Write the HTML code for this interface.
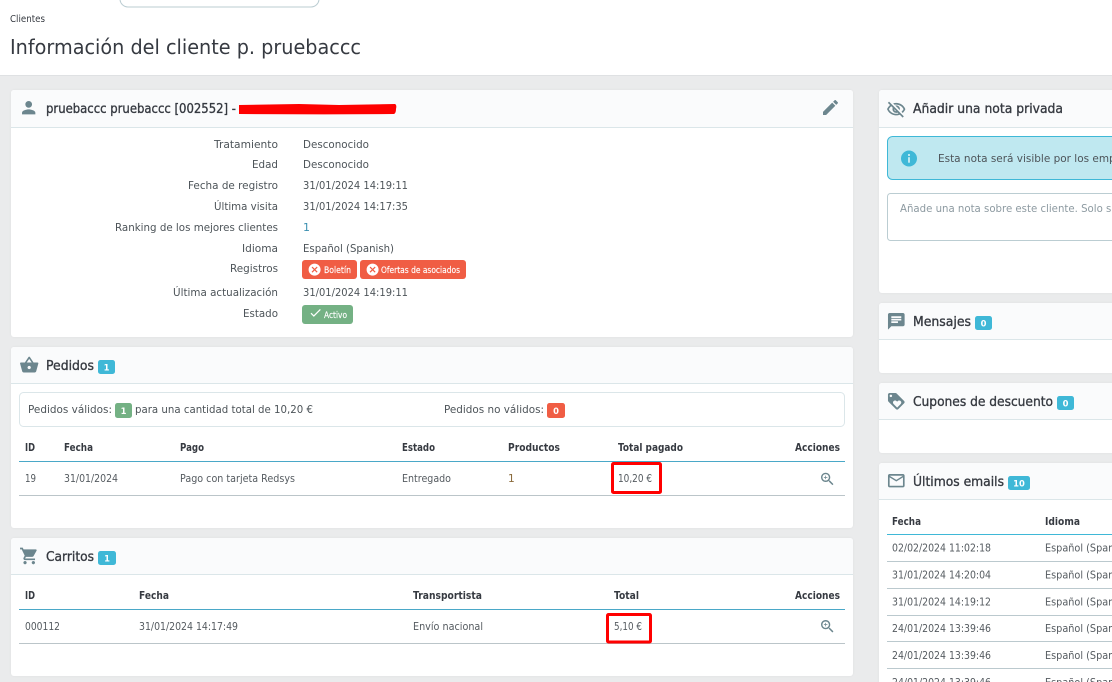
<!DOCTYPE html>
<html lang="es"><head><meta charset="utf-8"><title>Información del cliente</title>
<style>
html,body{margin:0;padding:0;background:#eaebec;overflow:hidden;width:1112px;height:682px}
svg{display:block;font-family:"DejaVu Sans","Liberation Sans",sans-serif}
text{white-space:pre}
.b{font-size:11px;fill:#4d5459}
.h{font-size:13.4px;fill:#363a41;stroke:#363a41;stroke-width:.35}
.th{font-size:10.6px;font-weight:bold;fill:#363a41}
.td{font-size:10.6px;fill:#555b60}
.s{font-size:8.8px;fill:#fff;stroke:#fff;stroke-width:.15}
.m{font-size:8.4px;fill:#fff;font-weight:bold;text-anchor:middle}
.i{fill:#6c868e}
.card{fill:#fff}
.head{fill:#fafbfc}
.ln{fill:#dbe6e9}
</style></head><body>
<svg xmlns="http://www.w3.org/2000/svg" width="1112" height="682" viewBox="0 0 1112 682">
<defs>
<filter id="sh" x="-2%" y="-5%" width="104%" height="110%"><feDropShadow dx="0" dy="0" stdDeviation="1" flood-color="#000" flood-opacity=".05"/></filter>
<path id="zoom" d="M15.5 14h-.79l-.28-.27C15.41 12.59 16 11.11 16 9.5 16 5.91 13.09 3 9.5 3S3 5.91 3 9.5 5.91 16 9.5 16c1.61 0 3.09-.59 4.23-1.57l.27.28v.79l5 4.99L20.49 19l-4.99-5zm-6 0C7.01 14 5 11.99 5 9.5S7.01 5 9.5 5 14 7.01 14 9.5 11.99 14 9.5 14zM12 10h-2v2H9v-2H7V9h2V7h1v2h2v1z"/>
</defs>

<!-- top header -->
<rect x="0" y="0" width="1112" height="75" fill="#fff"/>
<rect x="0" y="75" width="1112" height="1" fill="#dfe1e3"/>
<path d="M120 -2v1a8 8 0 0 0 8 8h183a8 8 0 0 0 8-8v-1" fill="#fff" stroke="#bbcdd2"/>
<text x="10" y="22" font-size="10" fill="#363a41" textLength="35" lengthAdjust="spacingAndGlyphs">Clientes</text>
<text x="10" y="54" font-size="20.8" fill="#363a41" textLength="351" lengthAdjust="spacingAndGlyphs">Información del cliente p. pruebaccc</text>

<!-- customer card -->
<g filter="url(#sh)"><rect class="card" x="11" y="90" width="842" height="247" rx="3"/></g>
<path class="head" d="M11 127V93a3 3 0 0 1 3-3h836a3 3 0 0 1 3 3v34z"/>
<rect class="ln" x="11" y="127" width="842" height="1"/>
<path class="i" transform="translate(18.7 97.7) scale(.833)" d="M12 12c2.21 0 4-1.79 4-4s-1.79-4-4-4-4 1.79-4 4 1.79 4 4 4zm0 2c-2.67 0-8 1.34-8 4v2h16v-2c0-2.66-5.33-4-8-4z"/>
<text class="h" x="46" y="113" textLength="190" lengthAdjust="spacingAndGlyphs">pruebaccc pruebaccc [002552] -</text>
<path d="M239 105l60-1 40 1 56-1q2 1 1 5q0 4-2 5l-70 .4-85-.4z" fill="#fe0000"/>
<path class="i" transform="translate(820.5 97.5) scale(.833)" d="M3 17.25V21h3.75L17.81 9.94l-3.75-3.75L3 17.25zM20.71 7.04c.39-.39.39-1.02 0-1.41l-2.34-2.34c-.39-.39-1.02-.39-1.41 0l-1.83 1.83 3.75 3.75 1.83-1.83z"/>

<text class="b" x="214" y="148" textLength="64" lengthAdjust="spacingAndGlyphs">Tratamiento</text>
<text class="b" x="252" y="168" textLength="26" lengthAdjust="spacingAndGlyphs">Edad</text>
<text class="b" x="188" y="189" textLength="90" lengthAdjust="spacingAndGlyphs">Fecha de registro</text>
<text class="b" x="214" y="210" textLength="64" lengthAdjust="spacingAndGlyphs">Última visita</text>
<text class="b" x="115" y="231" textLength="163" lengthAdjust="spacingAndGlyphs">Ranking de los mejores clientes</text>
<text class="b" x="242" y="252" textLength="36" lengthAdjust="spacingAndGlyphs">Idioma</text>
<text class="b" x="230" y="272" textLength="48" lengthAdjust="spacingAndGlyphs">Registros</text>
<text class="b" x="173" y="296" textLength="105" lengthAdjust="spacingAndGlyphs">Última actualización</text>
<text class="b" x="243" y="317" textLength="35" lengthAdjust="spacingAndGlyphs">Estado</text>

<text class="b" x="303" y="148" textLength="66" lengthAdjust="spacingAndGlyphs">Desconocido</text>
<text class="b" x="303" y="168" textLength="66" lengthAdjust="spacingAndGlyphs">Desconocido</text>
<text class="b" x="303" y="189" textLength="105" lengthAdjust="spacingAndGlyphs">31/01/2024 14:19:11</text>
<text class="b" x="303" y="210" textLength="105" lengthAdjust="spacingAndGlyphs">31/01/2024 14:17:35</text>
<text class="b" x="303" y="231" style="fill:#3a8fb0">1</text>
<text class="b" x="303" y="252" textLength="91" lengthAdjust="spacingAndGlyphs">Español (Spanish)</text>
<text class="b" x="303" y="296" textLength="105" lengthAdjust="spacingAndGlyphs">31/01/2024 14:19:11</text>

<rect x="302" y="260" width="55" height="19" rx="3" fill="#f05d44"/>
<path fill="#fff" transform="translate(307.4 262.4) scale(.6)" d="M12 2C6.47 2 2 6.47 2 12s4.47 10 10 10 10-4.47 10-10S17.53 2 12 2zm5 13.59L15.59 17 12 13.41 8.41 17 7 15.59 10.59 12 7 8.41 8.41 7 12 10.59 15.59 7 17 8.41 13.41 12 17 15.59z"/>
<text class="s" x="324" y="273" textLength="27" lengthAdjust="spacingAndGlyphs">Boletín</text>
<rect x="360" y="260" width="106" height="19" rx="3" fill="#f05d44"/>
<path fill="#fff" transform="translate(365.4 262.4) scale(.6)" d="M12 2C6.47 2 2 6.47 2 12s4.47 10 10 10 10-4.47 10-10S17.53 2 12 2zm5 13.59L15.59 17 12 13.41 8.41 17 7 15.59 10.59 12 7 8.41 8.41 7 12 10.59 15.59 7 17 8.41 13.41 12 17 15.59z"/>
<text class="s" x="381" y="273" textLength="79" lengthAdjust="spacingAndGlyphs">Ofertas de asociados</text>
<rect x="302" y="305" width="51" height="19" rx="3" fill="#74b184"/>
<path fill="#fff" transform="translate(308.6 305.8) scale(.58)" d="M9 16.17L4.83 12l-1.41 1.41L9 19 21 7l-1.41-1.41z"/>
<text class="s" x="324" y="318" textLength="23" lengthAdjust="spacingAndGlyphs">Activo</text>

<!-- pedidos -->
<g filter="url(#sh)"><rect class="card" x="11" y="347" width="842" height="181" rx="3"/></g>
<path class="head" d="M11 383V350a3 3 0 0 1 3-3h836a3 3 0 0 1 3 3v33z"/>
<rect class="ln" x="11" y="383" width="842" height="1"/>
<path class="i" transform="translate(19.2 355) scale(.833)" d="M17.21 9l-4.38-6.56c-.19-.28-.51-.42-.83-.42-.32 0-.64.14-.83.43L6.79 9H2c-.55 0-1 .45-1 1 0 .09.01.18.04.27l2.54 9.27c.23.84 1 1.46 1.92 1.46h13c.92 0 1.69-.62 1.93-1.46l2.54-9.27L23 10c0-.55-.45-1-1-1h-4.79zM9 9l3-4.4L15 9H9zm3 8c-1.1 0-2-.9-2-2s.9-2 2-2 2 .9 2 2-.9 2-2 2z"/>
<text class="h" x="46" y="370" textLength="48" lengthAdjust="spacingAndGlyphs">Pedidos</text>
<rect x="98" y="360" width="17" height="14" rx="2.5" fill="#3fb8d7"/>
<text class="m" x="106.5" y="370.5">1</text>

<rect x="19.5" y="392.5" width="825" height="34" rx="4" fill="#fff" stroke="#dbe6e9"/>
<text class="b" x="28" y="413" textLength="84" lengthAdjust="spacingAndGlyphs">Pedidos válidos:</text>
<rect x="115" y="403" width="17" height="15" rx="2.5" fill="#74b184"/>
<text class="m" x="123.5" y="414">1</text>
<text class="b" x="135" y="413" textLength="178" lengthAdjust="spacingAndGlyphs">para una cantidad total de 10,20 €</text>
<text class="b" x="444" y="413" textLength="100" lengthAdjust="spacingAndGlyphs">Pedidos no válidos:</text>
<rect x="547" y="403" width="18" height="15" rx="2.5" fill="#f05d44"/>
<text class="m" x="556" y="414">0</text>

<text class="th" x="25" y="451" textLength="10" lengthAdjust="spacingAndGlyphs">ID</text>
<text class="th" x="64" y="451" textLength="29" lengthAdjust="spacingAndGlyphs">Fecha</text>
<text class="th" x="180" y="451" textLength="24" lengthAdjust="spacingAndGlyphs">Pago</text>
<text class="th" x="402" y="451" textLength="33" lengthAdjust="spacingAndGlyphs">Estado</text>
<text class="th" x="508" y="451" textLength="52" lengthAdjust="spacingAndGlyphs">Productos</text>
<text class="th" x="618" y="451" textLength="65" lengthAdjust="spacingAndGlyphs">Total pagado</text>
<text class="th" x="795" y="451" textLength="45" lengthAdjust="spacingAndGlyphs">Acciones</text>
<rect x="19" y="461" width="826" height="1" fill="#4aa8c8"/>
<text class="td" x="25" y="482" textLength="11" lengthAdjust="spacingAndGlyphs">19</text>
<text class="td" x="64" y="482" textLength="54" lengthAdjust="spacingAndGlyphs">31/01/2024</text>
<text class="td" x="180" y="482" textLength="115" lengthAdjust="spacingAndGlyphs">Pago con tarjeta Redsys</text>
<text class="td" x="402" y="482" textLength="49" lengthAdjust="spacingAndGlyphs">Entregado</text>
<text class="td" x="508" y="482" style="fill:#8a6a3a">1</text>
<text class="td" x="618" y="482" textLength="34" lengthAdjust="spacingAndGlyphs">10,20 €</text>
<use href="#zoom" class="i" transform="translate(818.9 470.6) scale(.71)"/>
<rect x="19" y="495" width="826" height="1" fill="#bbc5c9"/>
<rect x="612.5" y="463.5" width="48" height="29" rx="1" fill="none" stroke="#f00" stroke-width="3"/>

<!-- carritos -->
<g filter="url(#sh)"><rect class="card" x="11" y="538" width="842" height="138" rx="3"/></g>
<path class="head" d="M11 574V541a3 3 0 0 1 3-3h836a3 3 0 0 1 3 3v33z"/>
<rect class="ln" x="11" y="574" width="842" height="1"/>
<path class="i" transform="translate(19.2 546) scale(.833)" d="M7 18c-1.1 0-1.99.9-1.99 2S5.9 22 7 22s2-.9 2-2-.9-2-2-2zM1 2v2h2l3.6 7.59-1.35 2.45c-.16.28-.25.61-.25.96 0 1.1.9 2 2 2h12v-2H7.42c-.14 0-.25-.11-.25-.25l.03-.12.9-1.63h7.45c.75 0 1.41-.41 1.75-1.03l3.58-6.49c.08-.14.12-.31.12-.48 0-.55-.45-1-1-1H5.21l-.94-2H1zm16 16c-1.1 0-1.99.9-1.99 2s.89 2 1.99 2 2-.9 2-2-.9-2-2-2z"/>
<text class="h" x="46" y="561" textLength="48" lengthAdjust="spacingAndGlyphs">Carritos</text>
<rect x="98" y="551" width="18" height="14" rx="2.5" fill="#3fb8d7"/>
<text class="m" x="107" y="561.5">1</text>

<text class="th" x="25" y="599" textLength="10" lengthAdjust="spacingAndGlyphs">ID</text>
<text class="th" x="139" y="599" textLength="30" lengthAdjust="spacingAndGlyphs">Fecha</text>
<text class="th" x="413" y="599" textLength="69" lengthAdjust="spacingAndGlyphs">Transportista</text>
<text class="th" x="614" y="599" textLength="25" lengthAdjust="spacingAndGlyphs">Total</text>
<text class="th" x="795" y="599" textLength="45" lengthAdjust="spacingAndGlyphs">Acciones</text>
<rect x="19" y="609" width="826" height="1" fill="#4aa8c8"/>
<text class="td" x="25" y="630" textLength="35" lengthAdjust="spacingAndGlyphs">000112</text>
<text class="td" x="139" y="630" textLength="99" lengthAdjust="spacingAndGlyphs">31/01/2024 14:17:49</text>
<text class="td" x="413" y="630" textLength="70" lengthAdjust="spacingAndGlyphs">Envío nacional</text>
<text class="td" x="614" y="630" textLength="28" lengthAdjust="spacingAndGlyphs">5,10 €</text>
<use href="#zoom" class="i" transform="translate(818.9 617.9) scale(.71)"/>
<rect x="19" y="643" width="826" height="1" fill="#bbc5c9"/>
<rect x="607.5" y="614.5" width="43" height="27.5" rx="1" fill="none" stroke="#f00" stroke-width="3"/>

<!-- right column: nota -->
<g filter="url(#sh)"><rect class="card" x="879" y="90" width="240" height="203" rx="3"/></g>
<path class="head" d="M879 127V93a3 3 0 0 1 3-3h237v37z"/>
<rect class="ln" x="879" y="127" width="233" height="1"/>
<path class="i" transform="translate(886.2 99.6) scale(.833)" d="M12 6c3.79 0 7.17 2.13 8.82 5.5-.59 1.22-1.42 2.27-2.41 3.12l1.41 1.41c1.39-1.23 2.49-2.77 3.18-4.53C21.27 7.11 17 4 12 4c-1.27 0-2.49.2-3.64.57l1.65 1.65C10.66 6.09 11.32 6 12 6zm-1.07 1.14L13 9.21c.57.25 1.03.71 1.28 1.28l2.07 2.07c.08-.34.14-.7.14-1.07C16.5 9.01 14.48 7 12 7c-.37 0-.72.05-1.07.14zM2.01 3.87l2.68 2.68C3.06 7.83 1.77 9.53 1 11.5 2.73 15.89 7 19 12 19c1.52 0 2.98-.29 4.32-.82l3.42 3.42 1.41-1.41L3.42 2.45 2.01 3.87zm7.5 7.5l2.61 2.61c-.04.01-.08.02-.12.02-1.38 0-2.5-1.12-2.5-2.5 0-.05.01-.08.01-.13zm-3.4-3.4l1.75 1.75c-.23.55-.36 1.15-.36 1.78 0 2.48 2.02 4.5 4.5 4.5.63 0 1.23-.13 1.77-.36l.98.98c-.88.24-1.8.38-2.75.38-3.79 0-7.17-2.13-8.82-5.5.7-1.43 1.72-2.61 2.93-3.53z"/>
<text class="h" x="913" y="113" textLength="150" lengthAdjust="spacingAndGlyphs">Añadir una nota privada</text>
<rect x="887.5" y="136.5" width="240" height="43" rx="5" fill="#bfe8f0" stroke="#3fb8d7"/>
<circle cx="909" cy="158.5" r="8" fill="#3fb8d7"/>
<rect x="908" y="154" width="2" height="2" fill="#bfe8f0"/><rect x="908" y="157.2" width="2" height="5.5" fill="#bfe8f0"/>
<text class="b" x="938" y="162" textLength="212" lengthAdjust="spacingAndGlyphs">Esta nota será visible por los empleados</text>
<rect x="887.5" y="193.5" width="240" height="47" rx="3" fill="#fff" stroke="#bbcdd2"/>
<text class="b" x="900" y="212" textLength="228" lengthAdjust="spacingAndGlyphs" style="fill:#8d9aa1">Añade una nota sobre este cliente. Solo será</text>

<!-- mensajes -->
<g filter="url(#sh)"><rect class="card" x="879" y="303" width="240" height="70" rx="3"/></g>
<path class="head" d="M879 339V306a3 3 0 0 1 3-3h237v36z"/>
<rect class="ln" x="879" y="339" width="233" height="1"/>
<path class="i" transform="translate(886.3 311.3) scale(.833)" d="M20 2H4c-1.1 0-1.99.9-1.99 2L2 22l4-4h14c1.1 0 2-.9 2-2V4c0-1.1-.9-2-2-2zM6 9h12v2H6V9zm8 5H6v-2h8v2zm4-6H6V6h12v2z"/>
<text class="h" x="913" y="326" textLength="58" lengthAdjust="spacingAndGlyphs">Mensajes</text>
<rect x="975" y="316" width="17" height="14" rx="2.5" fill="#3fb8d7"/>
<text class="m" x="983.5" y="326.5">0</text>

<!-- cupones -->
<g filter="url(#sh)"><rect class="card" x="879" y="383" width="240" height="70" rx="3"/></g>
<path class="head" d="M879 419V386a3 3 0 0 1 3-3h237v36z"/>
<rect class="ln" x="879" y="419" width="233" height="1"/>
<path class="i" transform="translate(886.3 391.3) scale(.833)" d="M21.41 11.58l-9-9C12.05 2.22 11.55 2 11 2H4c-1.1 0-2 .9-2 2v7c0 .55.22 1.05.59 1.42l9 9c.36.36.86.58 1.41.58.55 0 1.05-.22 1.41-.59l7-7c.37-.36.59-.86.59-1.41 0-.55-.23-1.06-.59-1.42zM5.5 7C4.67 7 4 6.33 4 5.5S4.67 4 5.5 4 7 4.67 7 5.5 6.33 7 5.5 7zm11.77 8.27L13 19.54l-4.27-4.28C8.28 14.81 8 14.19 8 13.5c0-1.38 1.12-2.5 2.5-2.5.69 0 1.32.28 1.77.74l.73.72.73-.73c.45-.45 1.08-.73 1.77-.73 1.38 0 2.5 1.12 2.5 2.5 0 .69-.28 1.32-.73 1.77z"/>
<text class="h" x="913" y="406" textLength="140" lengthAdjust="spacingAndGlyphs">Cupones de descuento</text>
<rect x="1057" y="396" width="17" height="14" rx="2.5" fill="#3fb8d7"/>
<text class="m" x="1065.5" y="406.5">0</text>

<!-- emails -->
<g filter="url(#sh)"><rect class="card" x="879" y="463" width="240" height="240" rx="3"/></g>
<path class="head" d="M879 499V466a3 3 0 0 1 3-3h237v36z"/>
<rect class="ln" x="879" y="499" width="233" height="1"/>
<path class="i" transform="translate(886.3 470.7) scale(.833)" d="M20 4H4c-1.1 0-1.99.9-1.99 2L2 18c0 1.1.9 2 2 2h16c1.1 0 2-.9 2-2V6c0-1.1-.9-2-2-2zm0 14H4V8l8 5 8-5v10zm-8-7L4 6h16l-8 5z"/>
<text class="h" x="913" y="486" textLength="91" lengthAdjust="spacingAndGlyphs">Últimos emails</text>
<rect x="1008" y="476" width="22" height="14" rx="2.5" fill="#3fb8d7"/>
<text class="m" x="1019" y="486.5">10</text>

<text class="th" x="892" y="525" textLength="29" lengthAdjust="spacingAndGlyphs">Fecha</text>
<text class="th" x="1045" y="525" textLength="35" lengthAdjust="spacingAndGlyphs">Idioma</text>
<rect x="887" y="534" width="225" height="1" fill="#3fb8d7"/>
<text class="td" x="892" y="551.5" textLength="99" lengthAdjust="spacingAndGlyphs">02/02/2024 11:02:18</text>
<text class="td" x="1045" y="551.5" textLength="87" lengthAdjust="spacingAndGlyphs">Español (Spanish)</text>
<rect x="887" y="561" width="225" height="1" fill="#bbc9ce"/>
<text class="td" x="892" y="578.5" textLength="99" lengthAdjust="spacingAndGlyphs">31/01/2024 14:20:04</text>
<text class="td" x="1045" y="578.5" textLength="87" lengthAdjust="spacingAndGlyphs">Español (Spanish)</text>
<rect x="887" y="588" width="225" height="1" fill="#bbc9ce"/>
<text class="td" x="892" y="605.5" textLength="99" lengthAdjust="spacingAndGlyphs">31/01/2024 14:19:12</text>
<text class="td" x="1045" y="605.5" textLength="87" lengthAdjust="spacingAndGlyphs">Español (Spanish)</text>
<rect x="887" y="615" width="225" height="1" fill="#bbc9ce"/>
<text class="td" x="892" y="632" textLength="99" lengthAdjust="spacingAndGlyphs">24/01/2024 13:39:46</text>
<text class="td" x="1045" y="632" textLength="87" lengthAdjust="spacingAndGlyphs">Español (Spanish)</text>
<rect x="887" y="641" width="225" height="1" fill="#bbc9ce"/>
<text class="td" x="892" y="659" textLength="99" lengthAdjust="spacingAndGlyphs">24/01/2024 13:39:46</text>
<text class="td" x="1045" y="659" textLength="87" lengthAdjust="spacingAndGlyphs">Español (Spanish)</text>
<rect x="887" y="668" width="225" height="1" fill="#bbc9ce"/>
<text class="td" x="892" y="686" textLength="99" lengthAdjust="spacingAndGlyphs">24/01/2024 13:39:46</text>
<text class="td" x="1045" y="686" textLength="87" lengthAdjust="spacingAndGlyphs">Español (Spanish)</text>
</svg>
</body></html>
